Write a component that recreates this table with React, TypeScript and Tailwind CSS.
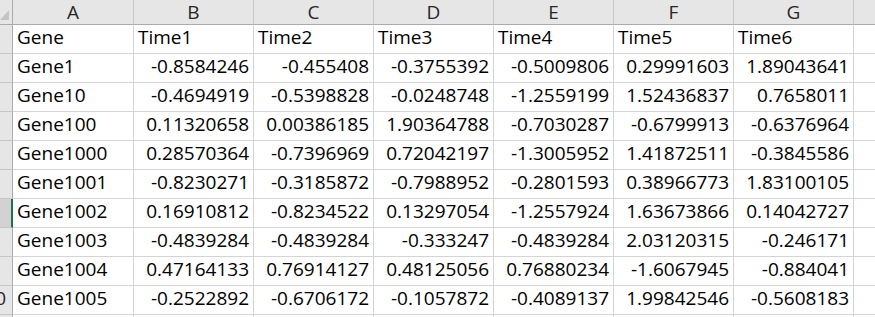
import React from 'react';

const cols = ['A', 'B', 'C', 'D', 'E', 'F', 'G'];

const rows: string[][] = [
  ['Gene', 'Time1', 'Time2', 'Time3', 'Time4', 'Time5', 'Time6'],
  ['Gene1', '-0.8584246', '-0.455408', '-0.3755392', '-0.5009806', '0.29991603', '1.89043641'],
  ['Gene10', '-0.4694919', '-0.5398828', '-0.0248748', '-1.2559199', '1.52436837', '0.7658011'],
  ['Gene100', '0.11320658', '0.00386185', '1.90364788', '-0.7030287', '-0.6799913', '-0.6376964'],
  ['Gene1000', '0.28570364', '-0.7396969', '0.72042197', '-1.3005952', '1.41872511', '-0.3845586'],
  ['Gene1001', '-0.8230271', '-0.3185872', '-0.7988952', '-0.2801593', '0.38966773', '1.83100105'],
  ['Gene1002', '0.16910812', '-0.8234522', '0.13297054', '-1.2557924', '1.63673866', '0.14042727'],
  ['Gene1003', '-0.4839284', '-0.4839284', '-0.333247', '-0.4839284', '2.03120315', '-0.246171'],
  ['Gene1004', '0.47164133', '0.76914127', '0.48125056', '0.76880234', '-1.6067945', '-0.884041'],
  ['Gene1005', '-0.2522892', '-0.6706172', '-0.1057872', '-0.4089137', '1.99842546', '-0.5608183'],
  ['', '', '', '', '', '', ''],
];

// active row in the sheet (row header gets the darker fill + green edge)
const ACTIVE_ROW = 6;

export default function App() {
  return (
    <div
      className="w-[875px] h-[317px] overflow-hidden bg-white text-black"
      style={{ fontFamily: '"Open Sans", "Noto Sans", sans-serif' }}
    >
      <div className="grid grid-cols-[13px_121px_repeat(6,120px)_1fr] text-[19px] leading-none">
        {/* column headers */}
        <div className="relative h-[25px] bg-[#e6e6e6] border-r border-b border-[#ababab] overflow-hidden">
          <svg className="absolute left-0 top-[10px]" width="9" height="10" viewBox="0 0 9 10">
            <polygon points="0,10 9,0 9,10" fill="#c4c4c4" />
          </svg>
        </div>
        {cols.map((c) => (
          <div
            key={c}
            className="h-[25px] bg-[#e6e6e6] border-r border-b border-r-[#c6c6c6] border-b-[#ababab] flex items-center justify-center text-[#262626]"
          >
            {c}
          </div>
        ))}
        <div className="h-[25px] bg-[#e6e6e6] border-b border-[#ababab]" />

        {rows.map((r, i) => (
          <React.Fragment key={i}>
            <RowHeader n={i + 1} active={i === ACTIVE_ROW} />
            {r.map((v, j) => (
              <Cell key={j} value={v} first={j === 0 || i === 0} />
            ))}
            <div className="h-[29px] border-b border-[#d4d4d4]" />
          </React.Fragment>
        ))}
      </div>
    </div>
  );
}

function RowHeader({ n, active }: { n: number; active: boolean }) {
  return (
    <div
      className={
        active
          ? 'h-[29px] bg-[#d2d2d2] border-b border-[#c6c6c6] border-r-2 border-r-[#217346] flex items-end justify-end overflow-hidden pb-[6px] pr-[5px]'
          : 'h-[29px] bg-[#e6e6e6] border-b border-[#c6c6c6] border-r border-r-[#ababab] flex items-end justify-end overflow-hidden pb-[6px] pr-[6px]'
      }
    >
      {n >= 10 && <span className="whitespace-nowrap text-[#262626]">{n}</span>}
    </div>
  );
}

function Cell({ value, first }: { value: string; first: boolean }) {
  return (
    <div
      className={
        'h-[29px] border-r border-b border-[#d4d4d4] flex items-end pb-[6px] whitespace-nowrap ' +
        (first ? 'justify-start pl-[4px]' : 'justify-end pr-[4px]')
      }
    >
      {value}
    </div>
  );
}
